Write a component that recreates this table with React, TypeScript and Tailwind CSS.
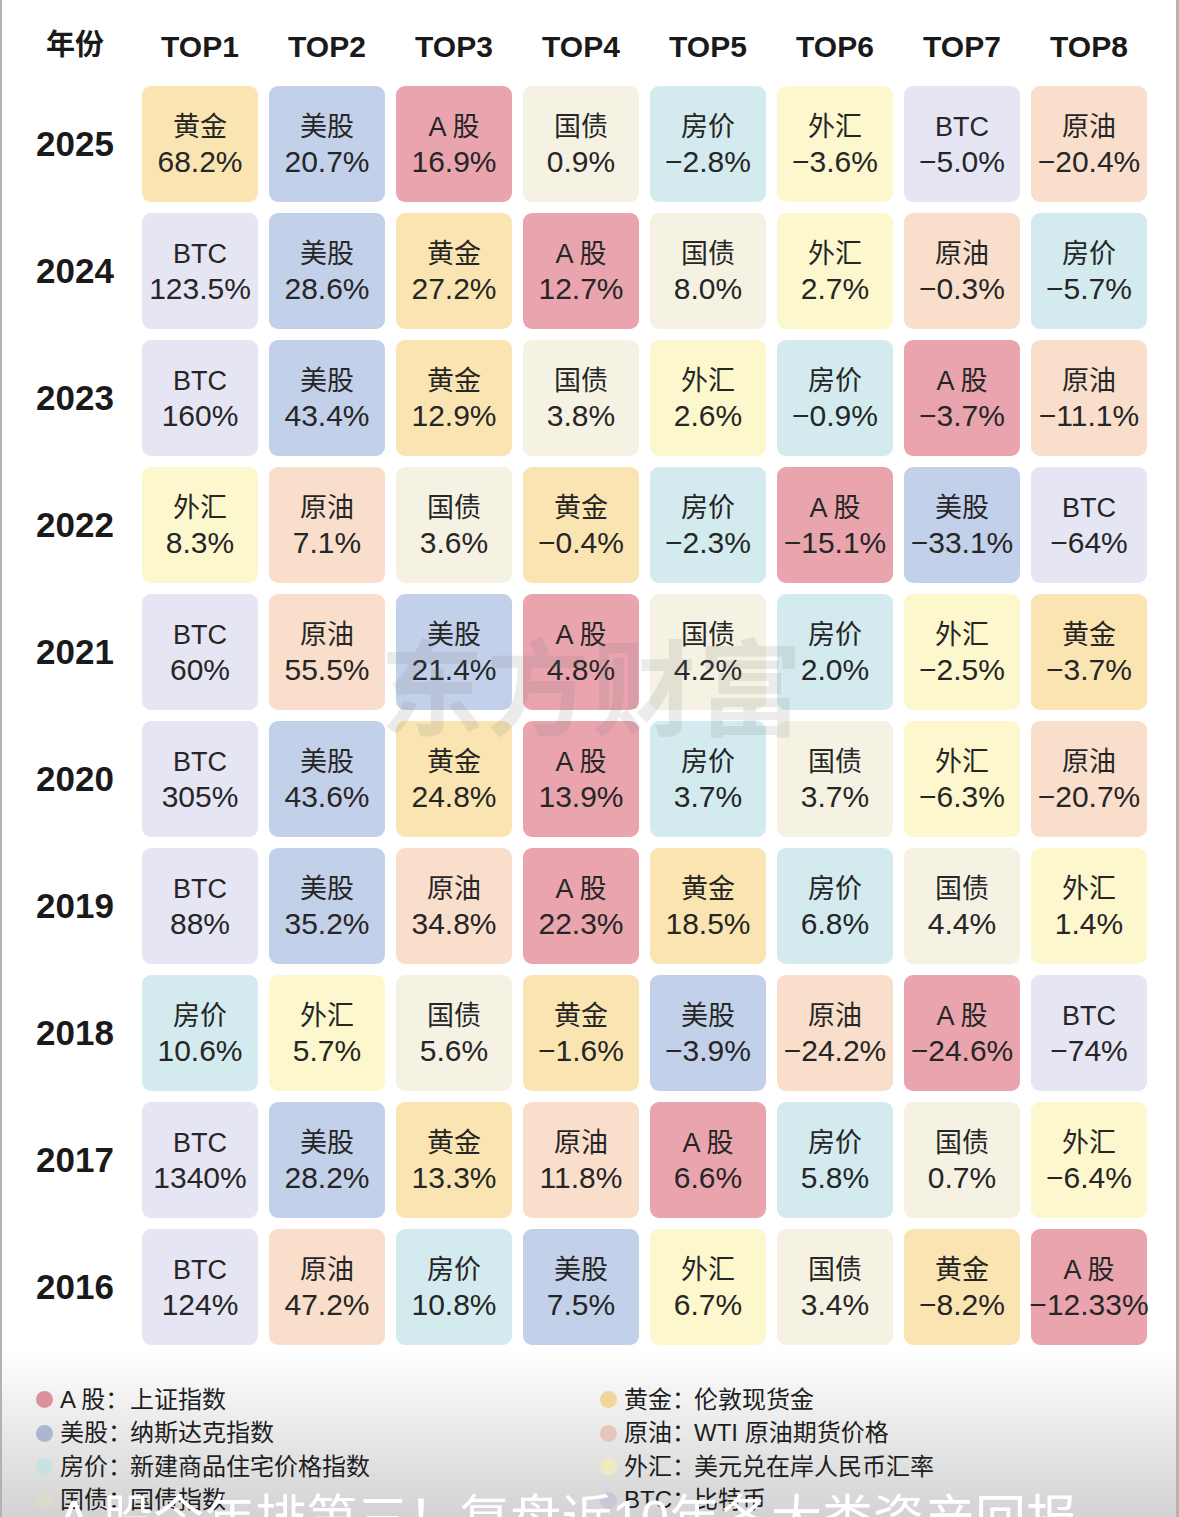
import React from 'react';

type Asset = '黄金' | '美股' | 'A股' | '国债' | '房价' | '外汇' | 'BTC' | '原油';

const cellColor: Record<Asset, string> = {
  黄金: 'bg-[#fae5b2]',
  美股: 'bg-[#c3d0ea]',
  A股: 'bg-[#e9a4ae]',
  国债: 'bg-[#f5f1e3]',
  房价: 'bg-[#d3ebee]',
  外汇: 'bg-[#fcf7cd]',
  BTC: 'bg-[#e6e5f3]',
  原油: 'bg-[#f9decc]',
};

const rows: { year: string; items: [Asset, string][] }[] = [
  { year: '2025', items: [['黄金', '68.2%'], ['美股', '20.7%'], ['A股', '16.9%'], ['国债', '0.9%'], ['房价', '−2.8%'], ['外汇', '−3.6%'], ['BTC', '−5.0%'], ['原油', '−20.4%']] },
  { year: '2024', items: [['BTC', '123.5%'], ['美股', '28.6%'], ['黄金', '27.2%'], ['A股', '12.7%'], ['国债', '8.0%'], ['外汇', '2.7%'], ['原油', '−0.3%'], ['房价', '−5.7%']] },
  { year: '2023', items: [['BTC', '160%'], ['美股', '43.4%'], ['黄金', '12.9%'], ['国债', '3.8%'], ['外汇', '2.6%'], ['房价', '−0.9%'], ['A股', '−3.7%'], ['原油', '−11.1%']] },
  { year: '2022', items: [['外汇', '8.3%'], ['原油', '7.1%'], ['国债', '3.6%'], ['黄金', '−0.4%'], ['房价', '−2.3%'], ['A股', '−15.1%'], ['美股', '−33.1%'], ['BTC', '−64%']] },
  { year: '2021', items: [['BTC', '60%'], ['原油', '55.5%'], ['美股', '21.4%'], ['A股', '4.8%'], ['国债', '4.2%'], ['房价', '2.0%'], ['外汇', '−2.5%'], ['黄金', '−3.7%']] },
  { year: '2020', items: [['BTC', '305%'], ['美股', '43.6%'], ['黄金', '24.8%'], ['A股', '13.9%'], ['房价', '3.7%'], ['国债', '3.7%'], ['外汇', '−6.3%'], ['原油', '−20.7%']] },
  { year: '2019', items: [['BTC', '88%'], ['美股', '35.2%'], ['原油', '34.8%'], ['A股', '22.3%'], ['黄金', '18.5%'], ['房价', '6.8%'], ['国债', '4.4%'], ['外汇', '1.4%']] },
  { year: '2018', items: [['房价', '10.6%'], ['外汇', '5.7%'], ['国债', '5.6%'], ['黄金', '−1.6%'], ['美股', '−3.9%'], ['原油', '−24.2%'], ['A股', '−24.6%'], ['BTC', '−74%']] },
  { year: '2017', items: [['BTC', '1340%'], ['美股', '28.2%'], ['黄金', '13.3%'], ['原油', '11.8%'], ['A股', '6.6%'], ['房价', '5.8%'], ['国债', '0.7%'], ['外汇', '−6.4%']] },
  { year: '2016', items: [['BTC', '124%'], ['原油', '47.2%'], ['房价', '10.8%'], ['美股', '7.5%'], ['外汇', '6.7%'], ['国债', '3.4%'], ['黄金', '−8.2%'], ['A股', '−12.33%']] },
];

const legendLeft: [string, string, string][] = [
  ['bg-[#dc929c]', 'A 股：', '上证指数'],
  ['bg-[#aab7d1]', '美股：', '纳斯达克指数'],
  ['bg-[#c8e2e2]', '房价：', '新建商品住宅价格指数'],
  ['bg-[#dcdac8]', '国债：', '国债指数'],
];

const legendRight: [string, string, string][] = [
  ['bg-[#efd59c]', '黄金：', '伦敦现货金'],
  ['bg-[#e4c7b8]', '原油：', 'WTI 原油期货价格'],
  ['bg-[#efebc0]', '外汇：', '美元兑在岸人民币汇率'],
  ['bg-[#c9c8d8]', 'BTC：', '比特币'],
];

const Cell = ({ asset, value }: { asset: Asset; value: string }) => (
  <div
    className={`w-[116px] h-[116px] shrink-0 rounded-[9px] flex flex-col items-center justify-center text-[#262626] whitespace-nowrap ${cellColor[asset]}`}
  >
    <div className="text-[27px] leading-[35px]">{asset === 'A股' ? 'A 股' : asset}</div>
    <div className="text-[30px] leading-[33px]">{value}</div>
  </div>
);

const LegendItem = ({ dot, label, text }: { dot: string; label: string; text: string }) => (
  <div className="flex items-center h-[33.5px] text-[24px] text-[#1e1e1e] whitespace-nowrap">
    <span className={`w-[17px] h-[17px] rounded-full mr-[7px] shrink-0 ${dot}`} />
    <span className="w-[70px]">{label}</span>
    <span>{text}</span>
  </div>
);

export default function App() {
  return (
    <div
      className="relative w-[1179px] h-[1517px] overflow-hidden bg-white border-l-2 border-r-[3px] border-[#b9afb0]"
      style={{ fontFamily: '"Liberation Sans", "Noto Sans CJK SC", sans-serif' }}
    >
      {/* header */}
      <div className="flex items-center gap-[11px] h-[86px] pt-[6px] text-[30px] font-bold text-[#1a1a1a]">
        <div className="w-[129px] pl-[17px] text-center text-[29px]">年份</div>
        {Array.from({ length: 8 }).map((_, i) => (
          <div key={i} className="w-[116px] text-center">TOP{i + 1}</div>
        ))}
      </div>

      {/* table */}
      <div className="flex flex-col gap-[11px]">
        {rows.map((r) => (
          <div key={r.year} className="flex items-center gap-[11px]">
            <div className="w-[129px] pl-[17px] text-center text-[35px] font-bold text-[#1a1a1a]">{r.year}</div>
            {r.items.map(([a, v], i) => (
              <Cell key={i} asset={a} value={v} />
            ))}
          </div>
        ))}
      </div>

      {/* legend */}
      <div className="mt-[1px] h-[171px] pt-[37px] pl-[34px] bg-gradient-to-b from-white to-[#d3d3d3] grid grid-cols-[564px_1fr]">
        <div>
          {legendLeft.map(([d, l, t]) => (
            <LegendItem key={l} dot={d} label={l} text={t} />
          ))}
        </div>
        <div>
          {legendRight.map(([d, l, t]) => (
            <LegendItem key={l} dot={d} label={l} text={t} />
          ))}
        </div>
      </div>

      {/* watermark */}
      <div className="absolute left-[378px] top-[640px] text-[104px] font-bold leading-none tracking-[2px] text-[#7a7a7a]/15 pointer-events-none whitespace-nowrap">
        东方财富
      </div>

      {/* caption overlay, cut by the bottom edge */}
      <div className="absolute left-[55px] top-[1494px] text-[51px] leading-none text-white whitespace-nowrap pointer-events-none">
        A 股今年排第三！复盘近10年各大类资产回报
      </div>
    </div>
  );
}
